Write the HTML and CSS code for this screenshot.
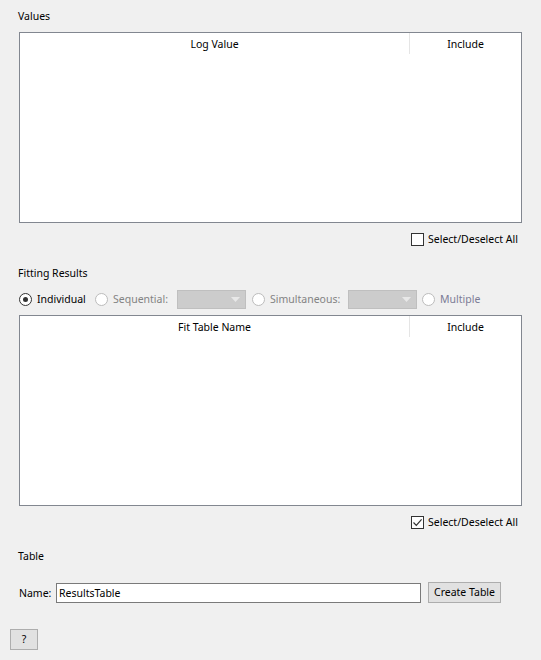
FILE: index.html
```html
<!DOCTYPE html>
<html>
<head>
<meta charset="utf-8">
<link rel="stylesheet" href="styles.css">
</head>
<body>
<div class="page">
  <div class="label sec-values">Values</div>
  <div class="table t1">
    <div class="thead">
      <div class="th col-main">Log Value</div>
      <div class="th col-inc">Include</div>
    </div>
  </div>
  <div class="selrow sel1">
    <span class="cb"></span><span class="cbtext">Select/Deselect All</span>
  </div>

  <div class="label sec-fit">Fitting Results</div>
  <div class="radios">
    <span class="radio on"></span><span class="rtext w-ind">Individual</span>
    <span class="radio off"></span><span class="rtext dis w-seq">Sequential:</span>
    <span class="combo c1"><svg width="9" height="5" viewBox="0 0 9 5"><path d="M0 0H9L4.5 5Z" fill="#e8e8e8"/></svg></span>
    <span class="radio off"></span><span class="rtext dis w-sim">Simultaneous:</span>
    <span class="combo c2"><svg width="9" height="5" viewBox="0 0 9 5"><path d="M0 0H9L4.5 5Z" fill="#e8e8e8"/></svg></span>
    <span class="radio off"></span><span class="rtext dis mult">Multiple</span>
  </div>
  <div class="table t2">
    <div class="thead">
      <div class="th col-main">Fit Table Name</div>
      <div class="th col-inc">Include</div>
    </div>
  </div>
  <div class="selrow sel2">
    <span class="cb checked"><svg width="11" height="11" viewBox="0 0 11 11"><path d="M1.5 5.5L4.3 8.3L9.6 2.3" fill="none" stroke="#333" stroke-width="1.2"/></svg></span><span class="cbtext">Select/Deselect All</span>
  </div>

  <div class="label sec-table">Table</div>
  <div class="namerow">
    <span class="namelbl">Name:</span>
    <span class="input">ResultsTable</span>
    <span class="btn create">Create Table</span>
  </div>
  <div class="helprow">
    <span class="btn help">?</span>
  </div>
</div>
</body>
</html>
```
FILE: styles.css
```css
html, body {
  margin: 0;
  padding: 0;
  background: #f0f0f0;
}
body {
  font-family: "Noto Sans", "DejaVu Sans", sans-serif;
  font-size: 10.5px;
  color: #000;
  width: 541px;
  height: 660px;
  overflow: hidden;
}
.page {
  display: flex;
  flex-direction: column;
  padding: 0 19px 0 19px;
}
.label {
  height: 16px;
  line-height: 16px;
  margin-left: -1px;
}
.sec-values { margin-top: 8px; margin-bottom: 8px; }
.sec-fit { margin-top: 17px; }
.sec-table { margin-top: 17px; }

.table {
  background: #fff;
  border: 1px solid #828790;
  box-sizing: border-box;
}
.t1 { height: 191px; }
.t2 { height: 191px; margin-top: 6px; }
.thead {
  display: flex;
  height: 21px;
}
.th {
  line-height: 22px;
  text-align: center;
}
.col-main {
  width: 389px;
  border-right: 1px solid #e5e5e5;
}
.col-inc { flex: 1; }

.selrow {
  display: flex;
  justify-content: flex-end;
  align-items: center;
  height: 17px;
}
.sel1 { margin-top: 8px; }
.sel2 { margin-top: 8px; }
.cb {
  width: 13px;
  height: 13px;
  box-sizing: border-box;
  border: 1px solid #333;
  background: #fff;
  margin-right: 4px;
  display: flex;
  align-items: center;
  justify-content: center;
}
.cb.checked svg { display: block; }
.cbtext {
  line-height: 17px;
  width: 94px;
  white-space: nowrap;
}

.radios {
  display: flex;
  align-items: center;
  height: 20px;
  margin-top: 8px;
}
.radio {
  width: 13px;
  height: 13px;
  box-sizing: border-box;
  border-radius: 50%;
  background: #fff;
  position: relative;
  margin-right: 5px;
  flex: none;
}
.radio.on { border: 1px solid #333; }
.radio.on::after {
  content: "";
  position: absolute;
  left: 3px;
  top: 3px;
  width: 5px;
  height: 5px;
  border-radius: 50%;
  background: #333;
}
.radio.off { border: 1px solid #bcbcbc; }
.rtext { white-space: nowrap; flex: none; }
.w-ind { width: 58px; }
.w-seq { width: 64px; }
.w-sim { width: 78px; }
.dis { color: #838383; }
.mult { color: #7c7c96; }
.combo {
  width: 69px;
  height: 19px;
  box-sizing: border-box;
  background: #cccccc;
  border: 1px solid #bfbfbf;
  display: flex;
  align-items: center;
  justify-content: flex-end;
  padding-right: 5px;
  flex: none;
}
.c1 { margin-right: 6px; }
.c2 { margin-right: 5px; }
.combo svg { display: block; }

.namerow {
  display: flex;
  align-items: center;
  margin-top: 18px;
  height: 21px;
}
.namelbl { width: 37px; flex: none; }
.input {
  width: 365px;
  height: 20px;
  box-sizing: border-box;
  border: 1px solid #7a7a7a;
  background: #fff;
  line-height: 18px;
  padding-left: 2px;
  margin-right: 7px;
}
.btn {
  box-sizing: border-box;
  background: #e1e1e1;
  border: 1px solid #adadad;
  text-align: center;
}
.create {
  width: 73px;
  height: 21px;
  line-height: 19px;
}
.helprow {
  margin-top: 26px;
  margin-left: -9px;
  display: flex;
}
.help {
  width: 28px;
  height: 21px;
  line-height: 19px;
}
```
